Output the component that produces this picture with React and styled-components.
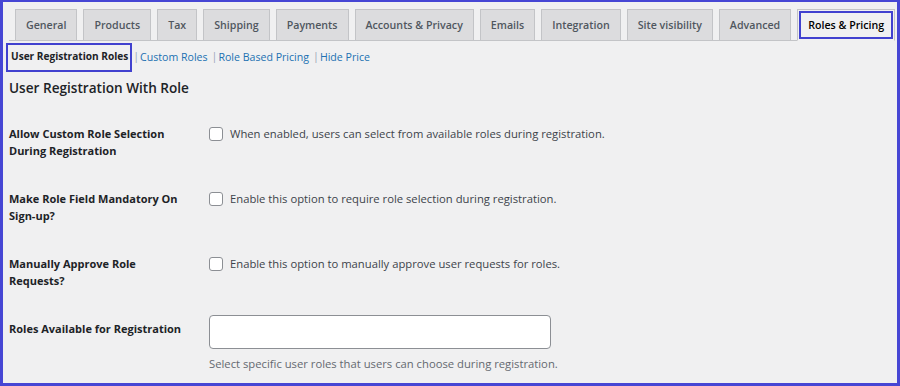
import styled, { createGlobalStyle } from "styled-components";

const GlobalStyle = createGlobalStyle`
    html, body {
        margin: 0;
        padding: 0;
        background: #f0f0f1;
    }
    body {
        font-family: "Open Sans", "Noto Sans", sans-serif;
        color: #3c434a;
    }
`

const Frame = styled.div`
    box-sizing: border-box;
    width: 900px;
    height: 386px;
    border: 3px solid #4646d4;
    border-top-width: 2px;
    background: #f0f0f1;
    padding: 0 6px;
    overflow: hidden;
`

const TabBar = styled.nav`
    display: flex;
    gap: 6px;
    padding: 7px 0 0 6px;
    border-bottom: 1px solid #c3c4c7;
`

const Tab = styled.a`
    box-sizing: border-box;
    display: flex;
    align-items: center;
    height: 32px;
    margin-bottom: -1px;
    padding: 0 10px;
    border: 1px solid #c3c4c7;
    background: ${({ $active }) => ($active ? "#f0f0f1" : "#dcdcde")};
    border-bottom-color: ${({ $active }) => ($active ? "#f0f0f1" : "#c3c4c7")};
    color: ${({ $active }) => ($active ? "#000" : "#50575e")};
    font-size: 10.65px;
    font-weight: 600;
    white-space: nowrap;
    outline: ${({ $active }) => ($active ? "2px solid #4141cf" : "none")};
    outline-offset: -4px;
`

const SubNav = styled.div`
    display: flex;
    align-items: center;
    height: 29px;
    margin-top: 2px;
    font-size: 10.6px;
    line-height: 15px;
`

const SubLink = styled.a`
    color: #2271b1;
    white-space: nowrap;
`

const CurrentSubLink = styled.span`
    box-sizing: border-box;
    display: flex;
    align-items: center;
    height: 29px;
    margin-left: -3px;
    padding: 0 2px 2px 3px;
    border: 2px solid #4141cf;
    color: #1d2327;
    font-size: 10.1px;
    font-weight: 700;
    white-space: nowrap;
`

const Sep = styled.span`
    color: #9aa3b5;
    margin: 0 1px 0 ${({ $first }) => ($first ? "1px" : "4px")};
    padding-bottom: 2px;
`

const Heading = styled.h2`
    margin: 6px 0 0;
    font-size: 13.6px;
    line-height: 20px;
    font-weight: 600;
    color: #1d2327;
`

const FormTable = styled.div`
    margin-top: 12px;
`

const Row = styled.div`
    display: grid;
    grid-template-columns: 200px 1fr;
    align-items: start;
    padding: 10px 0 16px;
`

const Label = styled.div`
    padding-top: 5px;
    font-size: 11px;
    line-height: 17px;
    font-weight: 700;
    color: #1d2327;
    width: 182px;
`

const CheckField = styled.label`
    display: flex;
    align-items: center;
    gap: 7px;
    padding-top: 5px;
    height: 17px;
    font-size: 11.25px;
    color: #3c434a;
`

const Box = styled.span`
    box-sizing: border-box;
    width: 14px;
    height: 14px;
    border: 1px solid #8c8f94;
    border-radius: 3px;
    background: #fff;
    flex-shrink: 0;
`

const TextInput = styled.div`
    box-sizing: border-box;
    width: 342px;
    height: 34px;
    border: 1px solid #8c8f94;
    border-radius: 4px;
    background: #fff;
`

const Help = styled.p`
    margin: 7px 0 0;
    font-size: 11.25px;
    line-height: 15px;
    color: #646970;
`

const tabs = ["General", "Products", "Tax", "Shipping", "Payments", "Accounts & Privacy", "Emails", "Integration", "Site visibility", "Advanced", "Roles & Pricing"];

const checks = [
    { label: "Allow Custom Role Selection During Registration", text: "When enabled, users can select from available roles during registration." },
    { label: "Make Role Field Mandatory On Sign-up?", text: "Enable this option to require role selection during registration." },
    { label: "Manually Approve Role Requests?", text: "Enable this option to manually approve user requests for roles." },
];

export default function App(){
    return(
        <Frame>
            <GlobalStyle />
            <TabBar>
                {tabs.map((t)=>(
                    <Tab key={t} $active={t === "Roles & Pricing"}>{t}</Tab>
                ))}
            </TabBar>

            <SubNav>
                <CurrentSubLink>User Registration Roles</CurrentSubLink>
                <Sep $first>|</Sep><SubLink>Custom Roles</SubLink>
                <Sep>|</Sep><SubLink>Role Based Pricing</SubLink>
                <Sep>|</Sep><SubLink>Hide Price</SubLink>
            </SubNav>

            <Heading>User Registration With Role</Heading>

            <FormTable>
                {checks.map((c)=>(
                    <Row key={c.label}>
                        <Label>{c.label}</Label>
                        <CheckField><Box />{c.text}</CheckField>
                    </Row>
                ))}
                <Row>
                    <Label>Roles Available for Registration</Label>
                    <div>
                        <TextInput />
                        <Help>Select specific user roles that users can choose during registration.</Help>
                    </div>
                </Row>
            </FormTable>
        </Frame>
    )
}
